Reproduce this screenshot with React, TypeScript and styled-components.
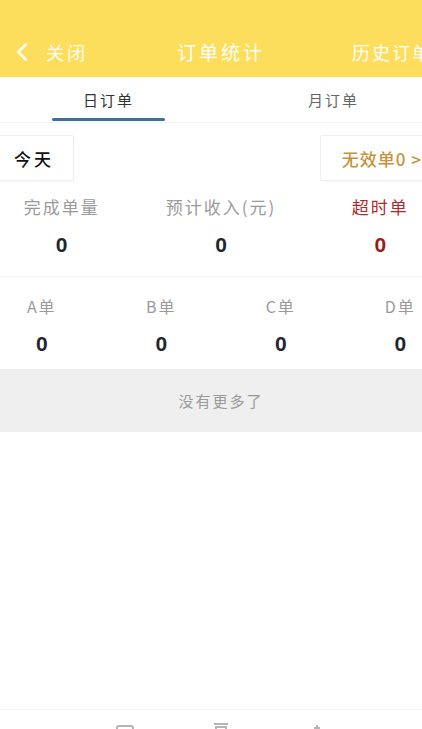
import styled, { createGlobalStyle } from "styled-components";
import { ChevronLeft } from "lucide-react";

const GlobalStyle = createGlobalStyle`
    html, body {
        margin: 0;
        padding: 0;
        background: #ffffff;
        overflow: hidden;
    }
    body {
        font-family: "Noto Sans CJK SC", "Noto Sans", sans-serif;
    }
`;

// the shot is a crop of a wider (and taller) screen
const Screen = styled.div`
    width: 478px;
    margin-left: -18px;
    min-height: 759px;
    display: flex;
    flex-direction: column;
    background: #ffffff;
`;

const Header = styled.header`
    height: 77px;
    background-color: #fcdd5c;
    display: flex;
    flex-direction: column;
`;

const StatusBar = styled.div`
    height: 26px;
`;

const NavRow = styled.div`
    flex: 1;
    display: grid;
    grid-template-columns: 1fr auto 1fr;
    align-items: center;
    color: #ffffff;
`;

const BackButton = styled.div`
    display: flex;
    align-items: center;
    gap: 9px;
    padding-left: 25px;
    font-size: 18px;
    letter-spacing: 3px;
    opacity: 0.95;
`;

const Title = styled.h1`
    margin: 0;
    font-size: 19px;
    font-weight: 400;
    letter-spacing: 3px;
`;

const HistoryLink = styled.div`
    justify-self: end;
    font-size: 18px;
    letter-spacing: 2px;
    white-space: nowrap;
    padding-right: 28px;
`;

const Tabs = styled.nav`
    height: 45px;
    display: grid;
    grid-template-columns: 1fr 1fr;
    padding: 0 14px;
    border-bottom: 1px solid #f3f3f3;
`;

const Tab = styled.div<{ $active?: boolean }>`
    position: relative;
    display: flex;
    align-items: center;
    justify-content: center;
    font-size: 15px;
    letter-spacing: 2px;
    color: ${(p) => (p.$active ? "#333333" : "#666666")};

    &::after {
        content: "";
        display: ${(p) => (p.$active ? "block" : "none")};
        position: absolute;
        left: 50%;
        bottom: 1px;
        width: 113px;
        height: 3px;
        margin-left: -57px;
        border-radius: 2px;
        background: #3c6e9f;
    }
`;

const FilterRow = styled.div`
    display: flex;
    justify-content: space-between;
    padding: 12px 12px 0;
`;

const FilterBox = styled.div<{ $accent?: boolean }>`
    height: 46px;
    box-sizing: border-box;
    padding: ${(p) => (p.$accent ? "0 25px 0 21px" : "0 19px")};
    display: flex;
    align-items: center;
    border: 1px solid #eeeeee;
    border-radius: 2px;
    box-shadow: 0 1px 2px rgba(0, 0, 0, 0.04);
    font-size: 17px;
    font-weight: 500;
    letter-spacing: ${(p) => (p.$accent ? "1px" : "3px")};
    color: ${(p) => (p.$accent ? "#c8913b" : "#111111")};
    white-space: nowrap;
`;

const StatsGrid = styled.div<{ $cols: number }>`
    display: grid;
    grid-template-columns: repeat(${(p) => p.$cols}, 1fr);
`;

const StatsBlock = styled.section<{ $divided?: boolean }>`
    padding: ${(p) => (p.$divided ? "14px 0 19px" : "17px 0 13px")};
    border-bottom: ${(p) => (p.$divided ? "1px solid #f3f3f3" : "none")};
`;

const Stat = styled.div`
    display: flex;
    flex-direction: column;
    align-items: center;
    gap: 14px;
`;

const StatLabel = styled.div<{ $alert?: boolean; $small?: boolean }>`
    font-size: ${(p) => (p.$small ? "16px" : "17px")};
    letter-spacing: 2px;
    line-height: 24px;
    color: ${(p) => (p.$alert ? "#b0292c" : "#9a9a9a")};
`;

const StatValue = styled.div<{ $alert?: boolean }>`
    font-family: "Liberation Sans", Arial, sans-serif;
    font-size: 21px;
    font-weight: 700;
    line-height: 24px;
    color: ${(p) => (p.$alert ? "#9c1a1d" : "#1f2630")};
`;

const NoMore = styled.div`
    height: 63px;
    background: #efefef;
    display: flex;
    align-items: center;
    justify-content: center;
    font-size: 15px;
    letter-spacing: 2px;
    color: #9a9a9a;
`;

const Spacer = styled.div`
    flex: 1;
`;

const BottomBar = styled.footer`
    height: 50px;
    border-top: 1px solid #f3f3f3;
    display: grid;
    grid-template-columns: repeat(5, 1fr);
    justify-items: center;
    padding-top: 11px;
    box-sizing: border-box;
`;

const BarIcon = styled.div`
    width: 22px;
    height: 22px;
    color: #b5b5b5;
`;

const mainStats = [
    { label: "完成单量", value: 0 },
    { label: "预计收入(元)", value: 0 },
    { label: "超时单", value: 0, alert: true },
];

const gradeStats = ["A单", "B单", "C单", "D单"];

export default function App() {
    return (
        <>
            <GlobalStyle />
            <Screen>
                <Header>
                    <StatusBar />
                    <NavRow>
                        <BackButton>
                            <ChevronLeft size={30} strokeWidth={2} />
                            关闭
                        </BackButton>
                        <Title>订单统计</Title>
                        <HistoryLink>历史订单</HistoryLink>
                    </NavRow>
                </Header>
                <Tabs>
                    <Tab $active>日订单</Tab>
                    <Tab>月订单</Tab>
                </Tabs>
                <FilterRow>
                    <FilterBox>今天</FilterBox>
                    <FilterBox $accent>无效单0 &gt;</FilterBox>
                </FilterRow>
                <StatsBlock $divided>
                    <StatsGrid $cols={3}>
                        {mainStats.map((s) => (
                            <Stat key={s.label}>
                                <StatLabel $alert={s.alert}>{s.label}</StatLabel>
                                <StatValue $alert={s.alert}>{s.value}</StatValue>
                            </Stat>
                        ))}
                    </StatsGrid>
                </StatsBlock>
                <StatsBlock>
                    <StatsGrid $cols={4}>
                        {gradeStats.map((g) => (
                            <Stat key={g}>
                                <StatLabel $small>{g}</StatLabel>
                                <StatValue>0</StatValue>
                            </Stat>
                        ))}
                    </StatsGrid>
                </StatsBlock>
                <NoMore>没有更多了</NoMore>
                <Spacer />
                <BottomBar>
                    <span />
                    <BarIcon>
                        <svg width="22" height="22" viewBox="0 0 22 22" fill="none" stroke="currentColor" strokeWidth="2">
                            <rect x="3" y="5" width="16" height="14" rx="2" />
                        </svg>
                    </BarIcon>
                    <BarIcon>
                        <svg width="22" height="22" viewBox="0 0 22 22" fill="none" stroke="currentColor" strokeWidth="2">
                            <path d="M4 3h14M6 6h10v13H6z" />
                        </svg>
                    </BarIcon>
                    <BarIcon>
                        <svg width="22" height="22" viewBox="0 0 22 22" fill="none" stroke="currentColor" strokeWidth="2">
                            <path d="M11 4v6M8 7h6" />
                        </svg>
                    </BarIcon>
                    <span />
                </BottomBar>
            </Screen>
        </>
    );
}
